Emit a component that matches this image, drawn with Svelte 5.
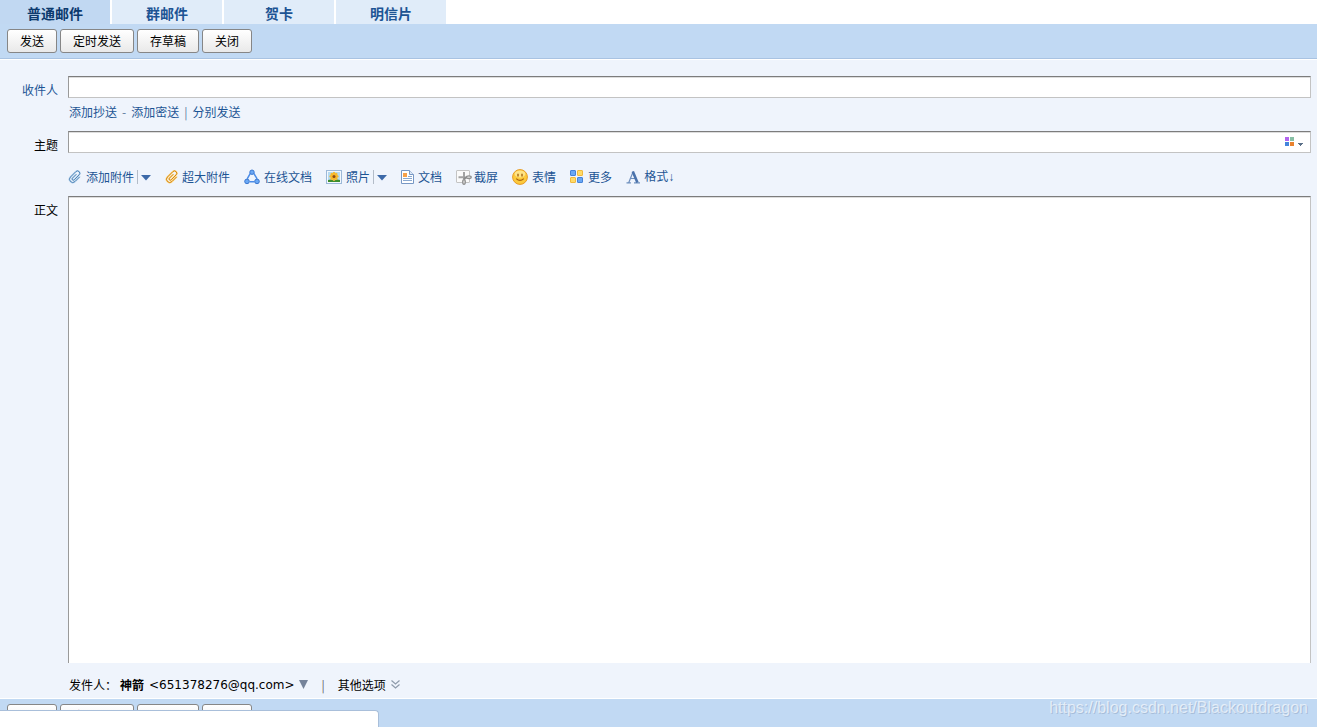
<script>
  const tabs = ['普通邮件', '群邮件', '贺卡', '明信片'];
  const actions = ['发送', '定时发送', '存草稿', '关闭'];

  const tools = [
    { icon: 'clip', label: '添加附件', split: true },
    { icon: 'clip-big', label: '超大附件' },
    { icon: 'online', label: '在线文档' },
    { icon: 'photo', label: '照片', split: true },
    { icon: 'doc', label: '文档' },
    { icon: 'capture', label: '截屏' },
    { icon: 'smile', label: '表情' },
    { icon: 'more', label: '更多' },
    { icon: 'format', label: '格式', arrow: '↓' }
  ];

  const petals = [0, 45, 90, 135, 180, 225, 270, 315];

  let activeTab = $state('普通邮件');
  let to = $state('');
  let subject = $state('');
  let content = $state('');
</script>

{#snippet clip(dark, light)}
  <svg width="14" height="14" viewBox="0 0 14 14" fill="none" stroke-linecap="round" stroke-linejoin="round">
    <g transform="rotate(45 7 7)">
      <path d="M10.2 4v6.2a3.2 3.2 0 0 1-6.4 0V2.6a2.3 2.3 0 0 1 4.6 0V9.6a1.2 1.2 0 0 1-2.4 0V4.6" stroke={light} stroke-width="1.8" />
      <path d="M10.2 4v6.2a3.2 3.2 0 0 1-6.4 0V2.6a2.3 2.3 0 0 1 4.6 0V9.6a1.2 1.2 0 0 1-2.4 0V4.6" stroke={dark} stroke-width="0.9" />
    </g>
  </svg>
{/snippet}

{#snippet icon(name)}
  {#if name === 'clip'}
    {@render clip('#4a80b4', '#c3dbf0')}
  {:else if name === 'clip-big'}
    <span class="narrow">{@render clip('#d07f0c', '#ffdf94')}</span>
  {:else if name === 'online'}
    <svg width="16" height="16" viewBox="0 0 16 16">
      <path d="M6.3 4.3 3.2 9.8M9.8 4.3l3.3 5.6M5.8 12.8h4.6" stroke="#4b8ce8" stroke-width="1.5" fill="none" />
      <g fill="#6aa8f5" stroke="#3b78d0" stroke-width="1">
        <circle cx="8" cy="3.2" r="2.2" />
        <circle cx="3" cy="12.4" r="2.3" />
        <circle cx="13" cy="12.4" r="2.3" />
      </g>
    </svg>
  {:else if name === 'photo'}
    <svg width="16" height="14" viewBox="0 0 16 14">
      <rect x="0.5" y="0.5" width="15" height="13" fill="#f3f8fd" stroke="#9db9d8" />
      <rect x="2" y="2" width="12" height="10" fill="#b4daf2" />
      <path d="M2 12V10l3-.6 3 1.2 3-1.2 3 .6v2z" fill="#3e8d2d" />
      {#each petals as angle}
        <ellipse cx="8" cy="3.7" rx="1.4" ry="1.9" fill="#f7b92b" transform="rotate({angle} 8 6.4)" />
      {/each}
      <circle cx="8" cy="6.4" r="1.5" fill="#8a4a13" />
    </svg>
  {:else if name === 'doc'}
    <svg width="13" height="14" viewBox="0 0 13 14">
      <path d="M0.5 0.5h8l4 4v9h-12z" fill="#fff" stroke="#7898c4" />
      <path d="M8.5 0.5v4h4" fill="#dce8f6" stroke="#7898c4" />
      <rect x="2" y="3" width="4" height="4" fill="#f6a14a" />
      <path d="M7 6.5h4M2 8.5h9M2 10.5h9" stroke="#8aa9d0" />
    </svg>
  {:else if name === 'capture'}
    <svg class="overhang" width="16" height="16" viewBox="0 0 16 16" fill="none">
      <rect x="0.5" y="1.5" width="13" height="12" rx="0.5" fill="#fafafa" stroke="#c4c4c4" />
      <path d="M2.5 8.2h7M8 3v7" stroke="#a2a2a2" stroke-width="2" />
      <path d="M8 10.2 10 8.2" stroke="#8b8b8b" stroke-width="2" />
      <ellipse cx="12.8" cy="8.2" rx="2.4" ry="1.3" fill="#e6e6e6" stroke="#8f8f8f" stroke-width="1.3" />
      <ellipse cx="8" cy="13" rx="1.3" ry="2.3" fill="#e6e6e6" stroke="#8f8f8f" stroke-width="1.3" />
    </svg>
  {:else if name === 'smile'}
    <svg width="16" height="16" viewBox="0 0 16 16">
      <circle cx="8" cy="8" r="7.4" fill="#fcca3c" stroke="#e69a25" />
      <ellipse cx="8" cy="5" rx="5.4" ry="3.4" fill="#ffe486" />
      <path d="M6 4.8v2.6M10 4.8v2.6" stroke="#9a5a08" stroke-width="1.3" />
      <path d="M4.2 9.6q3.8 3.6 7.6 0" fill="none" stroke="#a9620c" stroke-width="1.1" />
    </svg>
  {:else if name === 'more'}
    <svg width="14" height="14" viewBox="0 0 14 14">
      <rect x="0.5" y="0.5" width="5" height="5" rx="0.5" fill="#69a7f5" stroke="#4582d8" />
      <rect x="7.5" y="0.5" width="5" height="5" rx="0.5" fill="#ffdb68" stroke="#f0b93e" />
      <rect x="0.5" y="7.5" width="5" height="5" rx="0.5" fill="#ffdb68" stroke="#f0b93e" />
      <rect x="7.5" y="7.5" width="5" height="5" rx="0.5" fill="#69a7f5" stroke="#4582d8" />
    </svg>
  {:else if name === 'format'}
    <svg width="14" height="14" viewBox="0 0 14 14" fill="none">
      <path d="M2.8 12.5 7.2 1.5M3.8 8.5h6M0.5 12.8h4.4M8 12.8h6" stroke="#6e8fbd" stroke-width="1.2" />
      <path d="M6.8 1.5 11.4 12.6" stroke="#4a72ab" stroke-width="2.6" />
    </svg>
  {/if}
{/snippet}

<div class="page">
  <nav class="tabs">
    {#each tabs as tab}
      <button class="tab" class:active={tab === activeTab} onclick={() => (activeTab = tab)}>{tab}</button>
    {/each}
  </nav>

  <div class="actions top">
    {#each actions as action}
      <button class="btn">{action}</button>
    {/each}
  </div>

  <form class="compose" onsubmit={(e) => e.preventDefault()}>
    <label class="label link" for="to">收件人</label>
    <div class="field">
      <input id="to" class="box" type="text" bind:value={to} />
      <div class="cc">
        <a href="#cc">添加抄送</a>
        <span>-</span>
        <a href="#bcc">添加密送</a>
        <span>|</span>
        <a href="#separate">分别发送</a>
      </div>
    </div>

    <label class="label" for="subject">主题</label>
    <div class="field">
      <div class="box subject">
        <input id="subject" type="text" bind:value={subject} />
        <button type="button" class="color" aria-label="color">
          <svg width="18" height="10" viewBox="0 0 18 10" shape-rendering="crispEdges">
            <rect width="4" height="4" fill="#b264ee" />
            <rect x="5" width="4" height="4" fill="#87bfa5" />
            <rect y="5" width="4" height="4" fill="#4484dc" />
            <rect x="5" y="5" width="4" height="4" fill="#e9812e" />
            <path d="M13 6h5v1h-1v1h-1v1h-1v-1h-1v-1h-1z" fill="#5b7088" />
          </svg>
        </button>
      </div>
      <div class="tools">
        {#each tools as tool}
          <div class="tool">
            <a href="#{tool.icon}">
              {@render icon(tool.icon)}
              <span>{tool.label}{#if tool.arrow}<span class="arrow">{tool.arrow}</span>{/if}</span>
            </a>
            {#if tool.split}
              <button type="button" class="split" aria-label={tool.label}>
                <svg width="10" height="6" viewBox="0 0 10 6"><path d="M0 0h10L5 5.5z" fill="#3c69a8" /></svg>
              </button>
            {/if}
          </div>
        {/each}
      </div>
    </div>

    <label class="label" for="content">正文</label>
    <textarea id="content" class="box" bind:value={content}></textarea>

    <div class="sender">
      <span>发件人：</span>
      <b>神箭</b>
      <span class="address">&lt;651378276@qq.com&gt;</span>
      <svg width="9" height="9" viewBox="0 0 9 9"><path d="M0 0h9L4.5 9z" fill="#75839a" /></svg>
      <span class="bar">|</span>
      <a href="#options">
        其他选项
        <svg width="9" height="9" viewBox="0 0 9 9" fill="none" stroke="#8e9bab" stroke-width="1.2">
          <path d="M0.5 0.5l4 3.5 4-3.5M0.5 4.5l4 3.5 4-3.5" />
        </svg>
      </a>
    </div>
  </form>

  <div class="actions bottom">
    {#each actions as action}
      <button class="btn">{action}</button>
    {/each}
  </div>

  <!-- status bubble and watermark float over the bottom bar -->
  <div class="status"></div>
  <div class="watermark">https://blog.csdn.net/Blackoutdragon</div>
</div>

<style>
  :global(body) {
    margin: 0;
    background: #fff;
  }

  .page {
    position: relative;
    display: flex;
    flex-direction: column;
    height: 100vh;
    overflow: hidden;
    font-family: "Noto Sans CJK SC", sans-serif;
    font-size: 12px;
    line-height: 18px;
    color: #000;
  }

  button,
  input,
  textarea {
    font: inherit;
    box-sizing: border-box;
  }

  a {
    color: #1d5494;
    text-decoration: none;
  }

  svg {
    display: block;
    flex: none;
  }

  .tabs {
    display: flex;
    gap: 2px;
  }

  .tab {
    width: 110px;
    height: 24px;
    padding: 3px 0 1px;
    border: 0;
    background: #e0ecf9;
    color: #1d5494;
    font-size: 14px;
    font-weight: bold;
    line-height: 20px;
  }

  .tab.active {
    background: #c1d8f2;
    color: #0c3a6e;
  }

  .actions {
    display: flex;
    gap: 3px;
    padding: 5px 7px;
    background: #c1d9f3;
  }

  .top {
    border-bottom: 1px solid #a9c3e2;
  }

  .bottom {
    flex: none;
    height: 18px;
    overflow: hidden;
  }

  .btn {
    height: 24px;
    padding: 0 12px;
    border: 1px solid #868686;
    border-radius: 3px;
    background: linear-gradient(#fff, #e9e9e9);
    color: #000;
    line-height: 22px;
  }

  .compose {
    flex: 1;
    display: grid;
    grid-template-columns: 58px 1fr;
    grid-template-rows: auto auto 1fr auto;
    column-gap: 10px;
    padding: 16px 6px 0 0;
    border-top: 1px solid #fff;
    border-bottom: 1px solid #fff;
    background: #eff4fc;
  }

  .label {
    padding-top: 5px;
    text-align: right;
  }

  .label.link {
    color: #1d5494;
  }

  .box {
    display: block;
    width: 100%;
    height: 22px;
    padding: 0 4px;
    border: 1px solid;
    border-color: #7c7c7c #c3c3c3 #c3c3c3 #9a9a9a;
    border-radius: 0;
    background: #fff;
    box-shadow: inset 0 1px #ddd;
    box-sizing: border-box;
    outline: none;
  }

  .cc {
    display: flex;
    gap: 5px;
    padding: 0 1px 6px;
    line-height: 27px;
    color: #5c7a9e;
  }

  .subject {
    display: flex;
    align-items: center;
    padding: 0 7px 0 4px;
  }

  .subject input {
    flex: 1;
    min-width: 0;
    padding: 0;
    border: 0;
    background: none;
    outline: none;
  }

  .color,
  .split {
    padding: 0;
    border: 0;
    background: none;
  }

  .tools {
    display: flex;
    gap: 14px;
    height: 39px;
    padding-top: 4px;
  }

  .tool,
  .tool a {
    display: flex;
    align-items: center;
    white-space: nowrap;
  }

  .tool a {
    gap: 4px;
  }

  .narrow {
    width: 13px;
  }

  .overhang {
    margin-right: -2px;
  }

  .arrow {
    font-family: "Liberation Sans", sans-serif;
  }

  .split {
    margin-left: 3px;
    padding: 5px 0 3px 3px;
    border-left: 1px solid #b3bcc8;
  }

  textarea.box {
    height: 100%;
    padding: 4px;
    border-bottom: 0;
    resize: none;
  }

  .sender {
    grid-column: 2;
    display: flex;
    align-items: center;
    height: 27px;
    padding: 8px 1px 0;
  }

  .sender b {
    margin: 0 5px 0 3px;
  }

  .address {
    margin-right: 4px;
    font-family: "DejaVu Sans", sans-serif;
  }

  .bar {
    margin: 0 13px 0 14px;
    color: #666;
  }

  .sender a {
    display: flex;
    align-items: center;
    gap: 5px;
    color: #000;
  }

  .status {
    position: absolute;
    left: 0;
    bottom: 0;
    width: 378px;
    height: 16px;
    border: 1px solid #a9bfda;
    border-width: 1px 1px 0 0;
    border-top-right-radius: 4px;
    background: #fff;
  }

  .watermark {
    position: absolute;
    right: 9px;
    bottom: 9px;
    font-family: "Liberation Sans", sans-serif;
    font-size: 16px;
    line-height: 20px;
    color: rgba(255, 255, 255, 0.6);
    text-shadow: 1px 1px rgba(120, 140, 170, 0.35);
  }
</style>
